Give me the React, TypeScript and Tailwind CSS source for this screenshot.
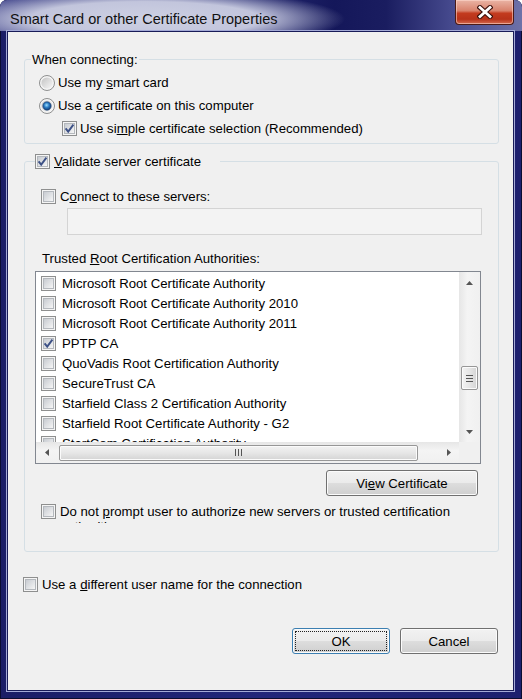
import React from 'react';

const certs = [
  { name: 'Microsoft Root Certificate Authority', checked: false },
  { name: 'Microsoft Root Certificate Authority 2010', checked: false },
  { name: 'Microsoft Root Certificate Authority 2011', checked: false },
  { name: 'PPTP CA', checked: true },
  { name: 'QuoVadis Root Certification Authority', checked: false },
  { name: 'SecureTrust CA', checked: false },
  { name: 'Starfield Class 2 Certification Authority', checked: false },
  { name: 'Starfield Root Certificate Authority - G2', checked: false },
  { name: 'StartCom Certification Authority', checked: false },
];

const CheckBox = ({ checked = false }: { checked?: boolean }) => (
  <svg width="15" height="15" viewBox="0 0 15 15" className="shrink-0">
    <defs>
      <linearGradient id="cbFill" x1="0" y1="0" x2="1" y2="1">
        <stop offset="0" stopColor="#c5c9cf" />
        <stop offset="1" stopColor="#f8f8f8" />
      </linearGradient>
    </defs>
    <rect x="0.5" y="0.5" width="14" height="14" fill="#f5f5f5" stroke="#8e8f8f" />
    <rect x="2.5" y="2.5" width="10" height="10" fill="url(#cbFill)" stroke="#b4b8bd" strokeWidth="1" />
    {checked && (
      <path d="M3.6 7.4 L6.2 10.6 L11.4 3.6" fill="none" stroke="#3d5186" strokeWidth="1.9" />
    )}
  </svg>
);

const Radio = ({ checked = false }: { checked?: boolean }) => (
  <svg width="16" height="16" viewBox="0 0 16 16" className="shrink-0">
    <defs>
      <linearGradient id="rdFill" x1="0" y1="0" x2="1" y2="1">
        <stop offset="0" stopColor="#c3c3c3" />
        <stop offset="1" stopColor="#f7f7f7" />
      </linearGradient>
      <radialGradient id="rdDot" cx="0.45" cy="0.4" r="0.65">
        <stop offset="0" stopColor="#9fe0ff" />
        <stop offset="0.45" stopColor="#2b7cc4" />
        <stop offset="1" stopColor="#0c2e63" />
      </radialGradient>
    </defs>
    <circle cx="8" cy="8" r="7.5" fill="#f4f4f4" stroke="#8e8f8f" />
    <circle cx="8" cy="8" r="5.6" fill="url(#rdFill)" />
    {checked && <circle cx="8" cy="8" r="4.2" fill="url(#rdDot)" stroke="#1a3f73" strokeWidth="0.6" />}
  </svg>
);

const Arrow = ({ dir }: { dir: 'up' | 'down' | 'left' | 'right' }) => {
  const pts = {
    up: '0,4 3.5,0 7,4',
    down: '0,0 3.5,4 7,0',
    left: '4,0 0,3.5 4,7',
    right: '0,0 4,3.5 0,7',
  }[dir];
  const vertical = dir === 'up' || dir === 'down';
  return (
    <svg width={vertical ? 7 : 4} height={vertical ? 4 : 7} viewBox={vertical ? '0 0 7 4' : '0 0 4 7'}>
      <polygon points={pts} fill="#555" />
    </svg>
  );
};

const Button = ({ children, focused = false, className = '' }: { children: React.ReactNode; focused?: boolean; className?: string }) => (
  <div
    className={`h-[26px] rounded-[3px] border p-[2px] flex bg-[linear-gradient(180deg,#f2f2f2_0%,#ebebeb_48%,#dddddd_52%,#cfcfcf_100%)] shadow-[inset_0_0_0_1px_#fbfbfb] ${
      focused ? 'border-[#3c7fb1]' : 'border-[#707070]'
    } ${className}`}
  >
    <div className={`flex-1 flex items-center justify-center ${focused ? 'border border-dotted border-[#222]' : ''}`}>
      {children}
    </div>
  </div>
);

export default function App() {
  return (
    <div className="w-[522px] h-[699px] flex flex-col rounded-t-[7px] overflow-hidden bg-[linear-gradient(90deg,#1a1d66,#22267a_50%,#1c1f6e)] shadow-[inset_0_0_0_1px_#0a0c30] font-['Liberation_Sans',Arial,sans-serif] text-black">
      {/* title bar */}
      <div className="h-[31px] shrink-0 flex items-start bg-[radial-gradient(ellipse_200px_30px_at_145px_19px,#cdd0e3_0%,#c2c5dc_58%,rgba(60,64,130,0)_100%),linear-gradient(90deg,#3d4189_0%,#282c74_45%,#14175a_64%,#1a1d60_74%,#4b4f93_88%,#6d71a8_100%)]">
        <div className="flex-1 pl-[10px] pt-[10px] text-[14.5px] leading-[18px] text-[#111]">
          Smart Card or other Certificate Properties
        </div>
        <div className="mr-[8px] w-[59px] h-[25px] rounded-b-[4px] border border-t-0 border-[#4a1a16] flex items-center justify-center bg-[linear-gradient(180deg,#eab4a5_0%,#d8826c_45%,#c33b1f_55%,#b7321a_80%,#d46a4f_100%)] shadow-[inset_0_0_0_1px_rgba(255,220,210,0.55)]">
          <svg width="16" height="14" viewBox="0 0 16 14">
            <path d="M3 2.5 L13 11.5 M13 2.5 L3 11.5" stroke="#3a0f0a" strokeWidth="5" strokeLinecap="square" />
            <path d="M3 2.5 L13 11.5 M13 2.5 L3 11.5" stroke="#ffffff" strokeWidth="2.8" strokeLinecap="square" />
          </svg>
        </div>
      </div>

      {/* client area */}
      <div className="ml-[7px] w-[507px] h-[660px] border border-[#181b58] shadow-[0_0_0_1px_#a3a9d6] bg-[#f0f0f0] flex flex-col text-[13.2px] leading-[15px]">
        {/* When connecting */}
        <fieldset className="ml-[16px] mt-[20px] w-[475px] border border-[#d5dfe5] rounded-[3px]">
          <legend className="ml-[6px] px-[1px] leading-[15px]">When connecting:</legend>
          <div className="pt-[4px] pb-[3px]">
            <div className="h-[23px] flex items-center pl-[14px] gap-[3px]">
              <Radio />
              <span>Use my <u>s</u>mart card</span>
            </div>
            <div className="h-[23px] flex items-center pl-[14px] gap-[3px]">
              <Radio checked />
              <span>Use a <u>c</u>ertificate on this computer</span>
            </div>
            <div className="h-[23px] flex items-center pl-[37px] gap-[3px]">
              <CheckBox checked />
              <span>Use si<u>m</u>ple certificate selection (Recommended)</span>
            </div>
          </div>
        </fieldset>

        {/* Validate server certificate */}
        <fieldset className="ml-[16px] mt-[9px] w-[475px] border border-[#d5dfe5] rounded-[3px]">
          <legend className="ml-[10px] pr-[19px] h-[16px] flex items-center gap-[4px]">
            <CheckBox checked />
            <span><u>V</u>alidate server certificate</span>
          </legend>
          <div className="pt-[17px] pl-[10px] pb-[28px] flex flex-col">
            <div className="h-[20px] flex items-center ml-[6px] gap-[4px]">
              <CheckBox />
              <span>C<u>o</u>nnect to these servers:</span>
            </div>
            <div className="mt-[2px] ml-[32px] w-[415px] h-[27px] border border-[#d4d4d4] bg-[#f3f3f3]" />
            <div className="mt-[16px] ml-[7px] leading-[16px]">
              Trusted <u>R</u>oot Certification Authorities:
            </div>

            {/* list */}
            <div className="mt-[4px] w-[446px] h-[193px] border border-[#828790] bg-white flex flex-col">
              <div className="h-[170px] flex">
                <div className="w-[423px] pt-[1px] overflow-hidden">
                  {certs.map((c) => (
                    <div key={c.name} className="h-[20px] flex items-center pl-[5px] gap-[6px] whitespace-nowrap">
                      <CheckBox checked={c.checked} />
                      <span>{c.name}</span>
                    </div>
                  ))}
                </div>
                <div className="w-[21px] flex flex-col bg-[linear-gradient(90deg,#e6e6e6,#f4f4f4_40%,#f0f0f0)]">
                  <div className="h-[21px] flex items-center justify-center">
                    <Arrow dir="up" />
                  </div>
                  <div className="flex-1 pt-[73px]">
                    <div className="mx-auto w-[17px] h-[24px] rounded-[2px] border border-[#979797] bg-[linear-gradient(90deg,#f3f3f3,#e6e6e6_50%,#d4d4d4)] shadow-[inset_0_0_0_1px_#fbfbfb] flex flex-col items-center justify-center gap-[2px]">
                      <div className="w-[7px] h-px bg-[#555]" />
                      <div className="w-[7px] h-px bg-[#555]" />
                      <div className="w-[7px] h-px bg-[#555]" />
                    </div>
                  </div>
                  <div className="h-[21px] flex items-center justify-center">
                    <Arrow dir="down" />
                  </div>
                </div>
              </div>
              <div className="h-[21px] flex">
                <div className="w-[423px] flex items-center bg-[linear-gradient(180deg,#e6e6e6,#f4f4f4_40%,#f0f0f0)]">
                  <div className="w-[21px] h-full flex items-center justify-center">
                    <Arrow dir="left" />
                  </div>
                  <div className="flex-1 h-full flex items-center pl-[2px]">
                    <div className="w-[359px] h-[16px] rounded-[2px] border border-[#979797] bg-[linear-gradient(180deg,#f3f3f3,#e6e6e6_50%,#d4d4d4)] shadow-[inset_0_0_0_1px_#fbfbfb] flex items-center justify-center gap-[2px]">
                      <div className="w-px h-[7px] bg-[#555]" />
                      <div className="w-px h-[7px] bg-[#555]" />
                      <div className="w-px h-[7px] bg-[#555]" />
                    </div>
                  </div>
                  <div className="w-[21px] h-full flex items-center justify-center">
                    <Arrow dir="right" />
                  </div>
                </div>
                <div className="w-[21px] bg-[#f0f0f0]" />
              </div>
            </div>

            <Button className="mt-[6px] ml-[291px] w-[152px]">
              Vi<u>e</u>w Certificate
            </Button>

            <div className="mt-[8px] ml-[6px] h-[19px] overflow-hidden flex items-start gap-[4px]">
              <CheckBox />
              <span className="w-[395px] leading-[15px]">
                Do not <u>p</u>rompt user to authorize new servers or trusted certification authorities.
              </span>
            </div>
          </div>
        </fieldset>

        <div className="mt-[22px] ml-[15px] h-[20px] flex items-center gap-[4px]">
          <CheckBox />
          <span>Use a <u>d</u>ifferent user name for the connection</span>
        </div>

        <div className="mt-[34px] mr-[15px] flex justify-end gap-[10px]">
          <Button focused className="w-[98px]">OK</Button>
          <Button className="w-[98px]">Cancel</Button>
        </div>
      </div>
    </div>
  );
}
